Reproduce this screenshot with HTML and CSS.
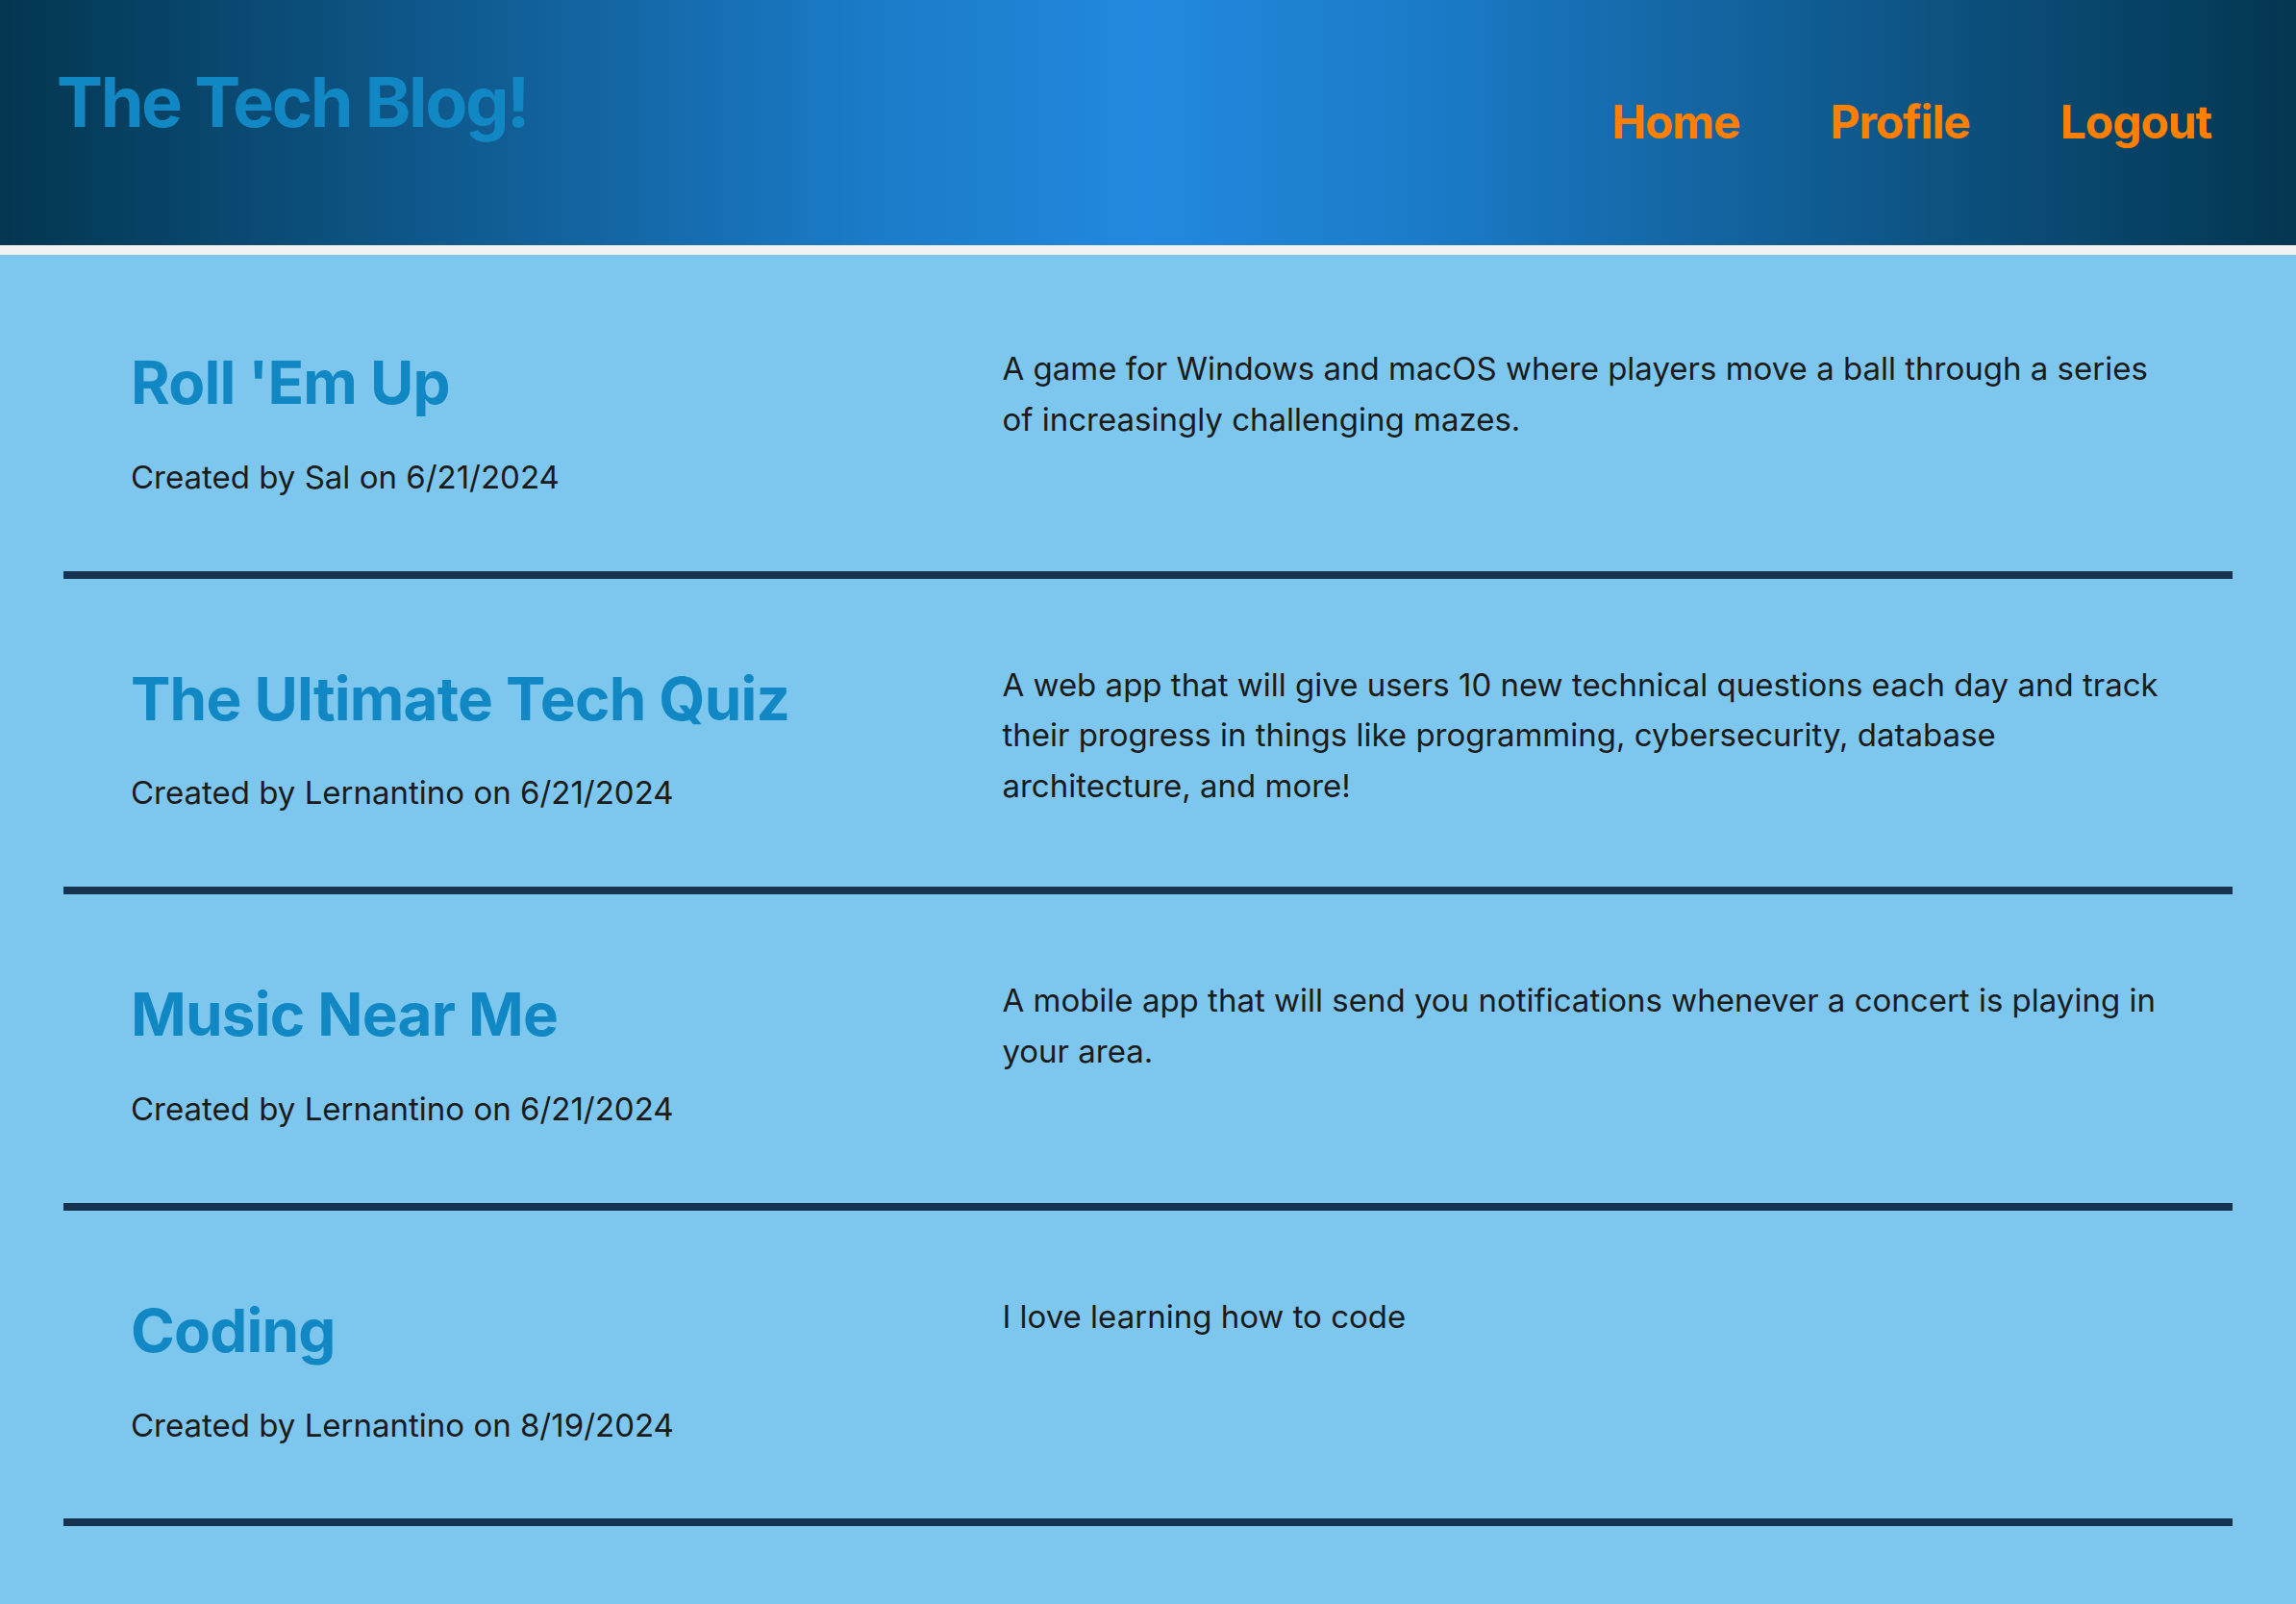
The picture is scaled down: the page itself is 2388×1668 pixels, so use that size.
FILE: index.html
```html
<!DOCTYPE html>
<html lang="en">
<head>
<meta charset="utf-8">
<title>The Tech Blog!</title>
<link rel="stylesheet" href="styles.css">
</head>
<body>
<header class="site-header">
  <h1 class="brand">The Tech Blog!</h1>
  <nav class="nav">
    <a class="nav-link" href="#">Home</a>
    <a class="nav-link" href="#">Profile</a>
    <a class="nav-link" href="#">Logout</a>
  </nav>
</header>
<main class="posts">
  <article class="post">
    <div class="post-head">
      <h2 class="post-title">Roll 'Em Up</h2>
      <p class="post-meta">Created by Sal on 6/21/2024</p>
    </div>
    <p class="post-body">A game for Windows and macOS where players move a ball through a series of increasingly challenging mazes.</p>
  </article>
  <article class="post">
    <div class="post-head">
      <h2 class="post-title">The Ultimate Tech Quiz</h2>
      <p class="post-meta">Created by Lernantino on 6/21/2024</p>
    </div>
    <p class="post-body">A web app that will give users 10 new technical questions each day and track their progress in things like programming, cybersecurity, database architecture, and more!</p>
  </article>
  <article class="post">
    <div class="post-head">
      <h2 class="post-title">Music Near Me</h2>
      <p class="post-meta">Created by Lernantino on 6/21/2024</p>
    </div>
    <p class="post-body">A mobile app that will send you notifications whenever a concert is playing in your area.</p>
  </article>
  <article class="post">
    <div class="post-head">
      <h2 class="post-title">Coding</h2>
      <p class="post-meta">Created by Lernantino on 8/19/2024</p>
    </div>
    <p class="post-body">I love learning how to code</p>
  </article>
</main>
</body>
</html>
```
FILE: styles.css
```css
html, body {
  margin: 0;
  padding: 0;
}

body {
  min-height: 1668px;
  background: #7dc7ee;
  font-family: Inter, "Noto Sans", "Liberation Sans", sans-serif;
  color: #1b1b1b;
}

.site-header {
  height: 255px;
  display: flex;
  justify-content: space-between;
  align-items: flex-start;
  padding: 0 88px 0 59px;
  background: linear-gradient(90deg, #033650 0%, #1b7bc8 38%, #2289de 50%, #1b7bc8 62%, #033650 100%);
  border-bottom: 10px solid #f2f2f2;
}

.brand {
  margin: 70px 0 0;
  font-size: 72px;
  line-height: 72px;
  font-weight: 700;
  letter-spacing: -2.4px;
  color: #1188c3;
}

.nav {
  display: flex;
  gap: 94px;
  margin-top: 103px;
}

.nav-link {
  font-size: 48px;
  line-height: 48px;
  font-weight: 700;
  letter-spacing: -1.1px;
  color: #ff8000;
  text-decoration: none;
}

.posts {
  padding: 8px 66px 0;
}

.post {
  display: grid;
  grid-template-columns: 3fr 4fr;
  padding: 87px 71px 71px 70px;
  border-bottom: 8px solid #15334f;
}

.post-title {
  margin: 0;
  font-size: 62px;
  line-height: 76.8px;
  font-weight: 700;
  letter-spacing: -0.8px;
  color: #1188c3;
}

.post-meta {
  margin: 33px 0 0;
  font-size: 33px;
  line-height: 52.8px;
}

.post-body {
  margin: -3px 0 0;
  font-size: 33px;
  line-height: 52.5px;
}
```
